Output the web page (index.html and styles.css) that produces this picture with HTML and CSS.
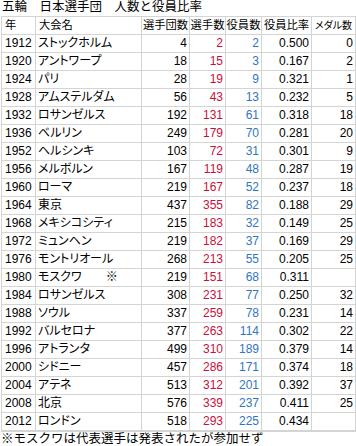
FILE: index.html
```html
<!DOCTYPE html>
<html lang="ja">
<head>
<meta charset="utf-8">
<link rel="stylesheet" href="styles.css">
</head>
<body>
<div class="title">五輪　日本選手団　人数と役員比率</div>
<div class="grid">
  <div class="c h l yr">年</div><div class="c h l">大会名</div><div class="c h">選手団数</div><div class="c h">選手数</div><div class="c h">役員数</div><div class="c h">役員比率</div><div class="c h sm">メダル数</div>

  <div class="c yr">1912</div><div class="c l">ストックホルム</div><div class="c r">4</div><div class="c r red">2</div><div class="c r blue">2</div><div class="c r">0.500</div><div class="c r">0</div>
  <div class="c yr">1920</div><div class="c l">アントワープ</div><div class="c r">18</div><div class="c r red">15</div><div class="c r blue">3</div><div class="c r">0.167</div><div class="c r">2</div>
  <div class="c yr">1924</div><div class="c l">パリ</div><div class="c r">28</div><div class="c r red">19</div><div class="c r blue">9</div><div class="c r">0.321</div><div class="c r">1</div>
  <div class="c yr">1928</div><div class="c l">アムステルダム</div><div class="c r">56</div><div class="c r red">43</div><div class="c r blue">13</div><div class="c r">0.232</div><div class="c r">5</div>
  <div class="c yr">1932</div><div class="c l">ロサンゼルス</div><div class="c r">192</div><div class="c r red">131</div><div class="c r blue">61</div><div class="c r">0.318</div><div class="c r">18</div>
  <div class="c yr">1936</div><div class="c l">ベルリン</div><div class="c r">249</div><div class="c r red">179</div><div class="c r blue">70</div><div class="c r">0.281</div><div class="c r">20</div>
  <div class="c yr">1952</div><div class="c l">ヘルシンキ</div><div class="c r">103</div><div class="c r red">72</div><div class="c r blue">31</div><div class="c r">0.301</div><div class="c r">9</div>
  <div class="c yr">1956</div><div class="c l">メルボルン</div><div class="c r">167</div><div class="c r red">119</div><div class="c r blue">48</div><div class="c r">0.287</div><div class="c r">19</div>
  <div class="c yr">1960</div><div class="c l">ローマ</div><div class="c r">219</div><div class="c r red">167</div><div class="c r blue">52</div><div class="c r">0.237</div><div class="c r">18</div>
  <div class="c yr">1964</div><div class="c l">東京</div><div class="c r">437</div><div class="c r red">355</div><div class="c r blue">82</div><div class="c r">0.188</div><div class="c r">29</div>
  <div class="c yr">1968</div><div class="c l">メキシコシティ</div><div class="c r">215</div><div class="c r red">183</div><div class="c r blue">32</div><div class="c r">0.149</div><div class="c r">25</div>
  <div class="c yr">1972</div><div class="c l">ミュンヘン</div><div class="c r">219</div><div class="c r red">182</div><div class="c r blue">37</div><div class="c r">0.169</div><div class="c r">29</div>
  <div class="c yr">1976</div><div class="c l">モントリオール</div><div class="c r">268</div><div class="c r red">213</div><div class="c r blue">55</div><div class="c r">0.205</div><div class="c r">25</div>
  <div class="c yr">1980</div><div class="c l">モスクワ　　※</div><div class="c r">219</div><div class="c r red">151</div><div class="c r blue">68</div><div class="c r">0.311</div><div class="c r"></div>
  <div class="c yr">1984</div><div class="c l">ロサンゼルス</div><div class="c r">308</div><div class="c r red">231</div><div class="c r blue">77</div><div class="c r">0.250</div><div class="c r">32</div>
  <div class="c yr">1988</div><div class="c l">ソウル</div><div class="c r">337</div><div class="c r red">259</div><div class="c r blue">78</div><div class="c r">0.231</div><div class="c r">14</div>
  <div class="c yr">1992</div><div class="c l">バルセロナ</div><div class="c r">377</div><div class="c r red">263</div><div class="c r blue">114</div><div class="c r">0.302</div><div class="c r">22</div>
  <div class="c yr">1996</div><div class="c l">アトランタ</div><div class="c r">499</div><div class="c r red">310</div><div class="c r blue">189</div><div class="c r">0.379</div><div class="c r">14</div>
  <div class="c yr">2000</div><div class="c l">シドニー</div><div class="c r">457</div><div class="c r red">286</div><div class="c r blue">171</div><div class="c r">0.374</div><div class="c r">18</div>
  <div class="c yr">2004</div><div class="c l">アテネ</div><div class="c r">513</div><div class="c r red">312</div><div class="c r blue">201</div><div class="c r">0.392</div><div class="c r">37</div>
  <div class="c yr">2008</div><div class="c l">北京</div><div class="c r">576</div><div class="c r red">339</div><div class="c r blue">237</div><div class="c r">0.411</div><div class="c r">25</div>
  <div class="c yr">2012</div><div class="c l">ロンドン</div><div class="c r">518</div><div class="c r red">293</div><div class="c r blue">225</div><div class="c r">0.434</div><div class="c r"></div>
</div>
<div class="note">※モスクワは代表選手は発表されたが参加せず</div>
</body>
</html>
```
FILE: styles.css
```css
html, body {
  margin: 0;
  padding: 0;
  background: #ffffff;
}
body {
  width: 356px;
  height: 446px;
  overflow: hidden;
  font-family: "Liberation Sans", "Noto Sans CJK JP", sans-serif;
  font-size: 12px;
  color: #000;
  font-feature-settings: "palt";
}
.title {
  height: 16px;
  line-height: 15px;
  padding-left: 2px;
  font-size: 12.5px;
  font-feature-settings: normal;
}
.grid {
  display: grid;
  grid-template-columns: 33px 105px 47px 35px 35px 49px 43px;
  grid-auto-rows: 17px;
  gap: 1px;
  background: #d4d4d4;
  border: 1px solid #d4d4d4;
  border-bottom-width: 2px;
  margin-left: 1px;
  width: max-content;
}
.c {
  background: #fff;
  line-height: 17px;
  padding: 0 2px;
  white-space: nowrap;
  overflow: hidden;
  text-align: center;
}
.l { text-align: left; }
.r { text-align: right; }
.yr { text-align: left; padding-left: 3px; padding-right: 0; }
.h {
  font-size: 11.3px;
  padding: 0;
  overflow: visible;
}
.h.l { padding-left: 3px; }
.sm { font-size: 10px; }
.red { color: #c8103a; }
.blue { color: #2f76c2; }
.note {
  line-height: 15px;
  padding-left: 1px;
  font-size: 12.5px;
  font-feature-settings: normal;
}
```
